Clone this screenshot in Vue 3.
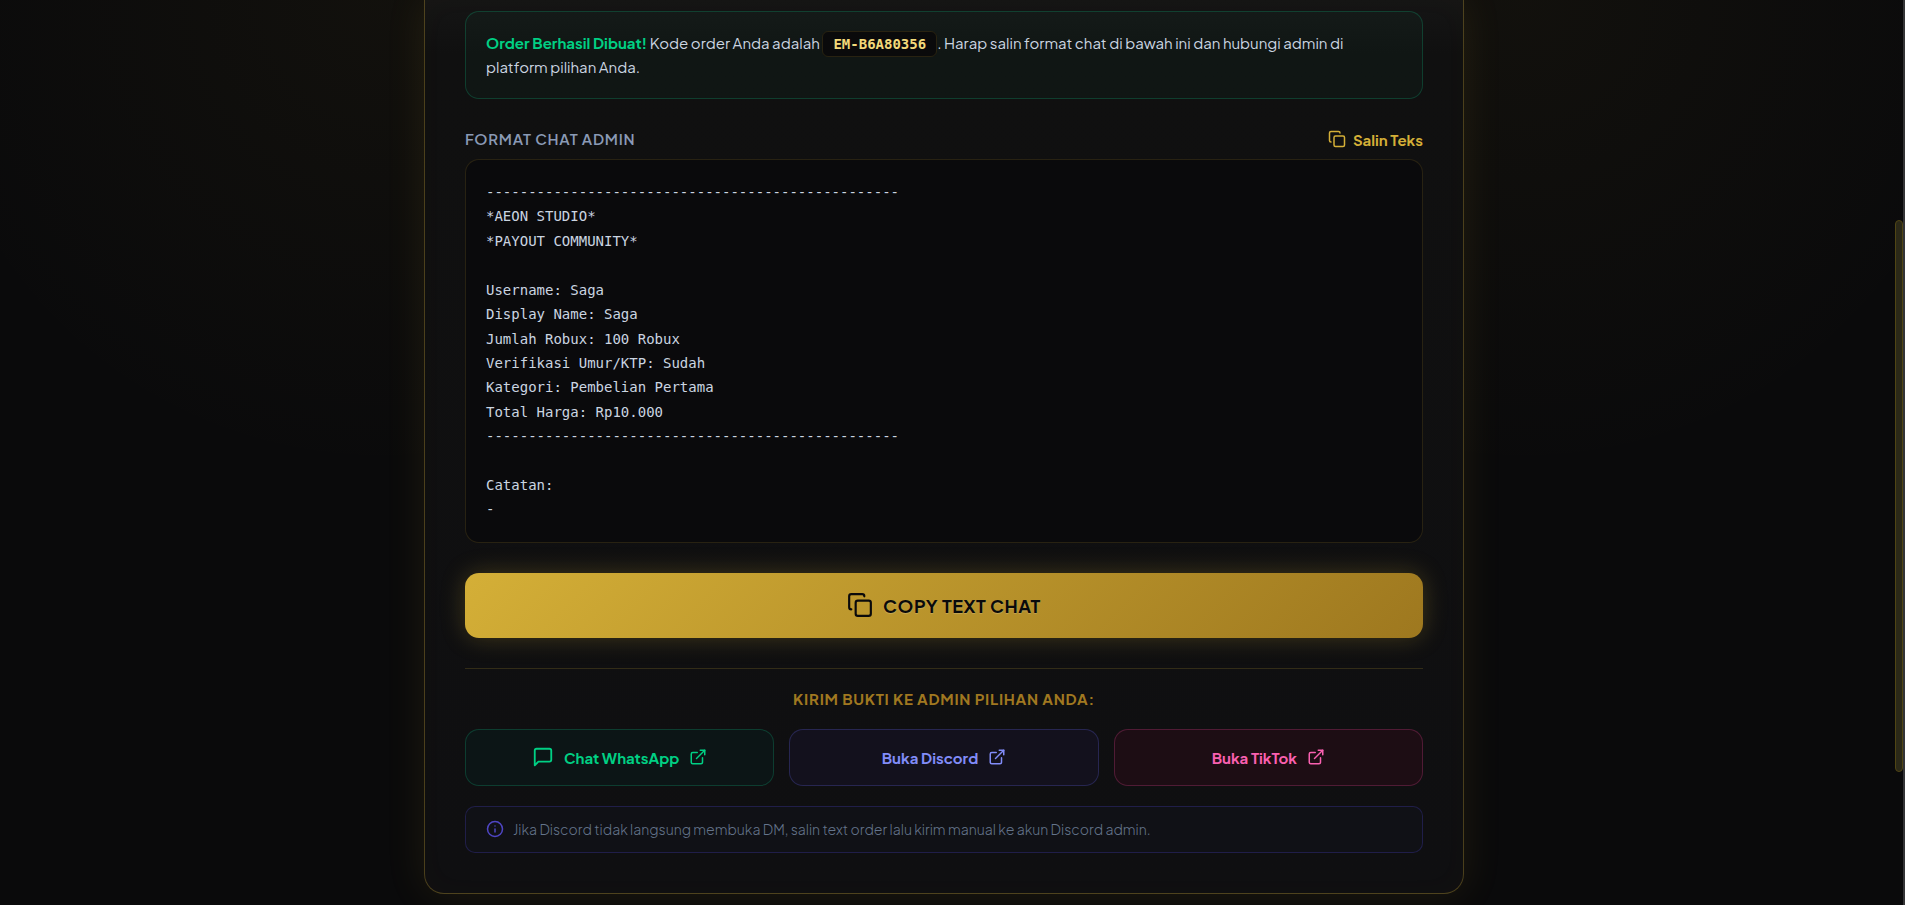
<template>
  <div class="page">
    <main class="card">
      <p class="alert">
        <strong>Order Berhasil Dibuat!</strong> Kode order Anda adalah
        <code class="code">{{ orderCode }}</code>. Harap salin format chat di bawah ini dan hubungi admin di platform pilihan Anda.
      </p>

      <div class="labelRow">
        <h3 class="label">FORMAT CHAT ADMIN</h3>
        <button class="copyLink" type="button" @click="copyText">
          <svg width="18" height="18" viewBox="0 0 24 24" class="ico">
            <rect x="8" y="8" width="14" height="14" rx="2" />
            <path d="M4 16c-1.1 0-2-.9-2-2V4c0-1.1.9-2 2-2h10c1.1 0 2 .9 2 2" />
          </svg>
          Salin Teks
        </button>
      </div>

      <pre class="chat">{{ chatText }}</pre>

      <button class="copyBtn" type="button" @click="copyText">
        <svg width="26" height="26" viewBox="0 0 24 24" class="ico">
          <rect x="8" y="8" width="14" height="14" rx="2" />
          <path d="M4 16c-1.1 0-2-.9-2-2V4c0-1.1.9-2 2-2h10c1.1 0 2 .9 2 2" />
        </svg>
        COPY TEXT CHAT
      </button>

      <section class="contact">
        <h4 class="contactTitle">KIRIM BUKTI KE ADMIN PILIHAN ANDA:</h4>

        <div class="links">
          <a v-for="l in links" :key="l.id" href="#" class="link" :class="l.id">
            <svg v-if="l.bubble" width="22" height="22" viewBox="0 0 24 24" class="ico">
              <path d="M21 15a2 2 0 0 1-2 2H7l-4 4V5a2 2 0 0 1 2-2h14a2 2 0 0 1 2 2z" />
            </svg>
            {{ l.text }}
            <svg width="18" height="18" viewBox="0 0 24 24" class="ico">
              <path d="M15 3h6v6" />
              <path d="M10 14 21 3" />
              <path d="M18 13v6a2 2 0 0 1-2 2H5a2 2 0 0 1-2-2V8a2 2 0 0 1 2-2h6" />
            </svg>
          </a>
        </div>

        <p class="note">
          <svg width="18" height="18" viewBox="0 0 24 24" class="ico">
            <circle cx="12" cy="12" r="10" />
            <path d="M12 16v-4" />
            <path d="M12 8h.01" />
          </svg>
          Jika Discord tidak langsung membuka DM, salin text order lalu kirim manual ke akun Discord admin.
        </p>
      </section>
    </main>

    <div class="track"><div class="thumb"></div></div>
  </div>
</template>

<script setup>
import { computed, ref } from "vue";

const orderCode = ref("EM-B6A80356");

const order = ref({
  username: "Saga",
  displayName: "Saga",
  robux: 100,
  verifikasi: "Sudah",
  kategori: "Pembelian Pertama",
  total: "Rp10.000",
});

const links = [
  { id: "whatsapp", text: "Chat WhatsApp", bubble: true },
  { id: "discord", text: "Buka Discord" },
  { id: "tiktok", text: "Buka TikTok" },
];

const line = "-".repeat(49);

const chatText = computed(() => [
  line,
  "*AEON STUDIO*",
  "*PAYOUT COMMUNITY*",
  "",
  `Username: ${order.value.username}`,
  `Display Name: ${order.value.displayName}`,
  `Jumlah Robux: ${order.value.robux} Robux`,
  `Verifikasi Umur/KTP: ${order.value.verifikasi}`,
  `Kategori: ${order.value.kategori}`,
  `Total Harga: ${order.value.total}`,
  line,
  "",
  "Catatan:",
  "-",
].join("\n"));

async function copyText() {
  await navigator.clipboard.writeText(chatText.value);
}
</script>

<style>
body { margin: 0; background: #0a0a0b; }
</style>

<style scoped>
.page {
  position: relative;
  box-sizing: border-box;
  min-height: 100vh;
  padding: 0 17px 11px 0;
  overflow: hidden;
  font-family: "Plus Jakarta Sans", Inter, sans-serif;
  font-size: 15px;
  color: #cbd5e1;
  background:
    radial-gradient(circle at 20% 0, rgba(212, 175, 55, .04), transparent 480px),
    radial-gradient(circle at 80% 0, rgba(212, 175, 55, .04), transparent 480px),
    #0a0a0b;
}

.card {
  box-sizing: border-box;
  max-width: 1040px;
  margin: 0 auto;
  padding: 11px 40px 40px;
  border: 1px solid rgba(212, 175, 55, .3);
  border-top: 0;
  border-radius: 0 0 20px 20px;
  background: linear-gradient(180deg, #151515, #101010 6%, #0f0f11);
  box-shadow: 0 0 40px rgba(212, 175, 55, .1), inset 0 0 30px rgba(212, 175, 55, .02);
}

.ico {
  flex: none;
  fill: none;
  stroke: currentColor;
  stroke-width: 2;
  stroke-linecap: round;
  stroke-linejoin: round;
}

.alert {
  margin: 0;
  padding: 19px 20px;
  border: 1px solid rgba(16, 185, 129, .25);
  border-radius: 14px;
  background: rgba(16, 185, 129, .04);
  line-height: 24px;
}
.alert strong { color: #00d084; }
.code {
  padding: 4px 10px;
  border: 1px solid rgba(212, 175, 55, .15);
  border-radius: 6px;
  background: #0a0a0b;
  color: #f3d97a;
  font-family: Consolas, "DejaVu Sans Mono", monospace;
  font-size: 14px;
  font-weight: 700;
  line-height: 1;
}

.labelRow {
  display: flex; justify-content: space-between; align-items: center;
  margin: 28px 0 8px;
}
.label { margin: 0; font-size: 15px; line-height: 24px; font-weight: 600; letter-spacing: .05em; color: #8a9ab5; }
.copyLink {
  display: flex; align-items: center; gap: 7px;
  padding: 0; border: 0; background: none;
  font: inherit; font-weight: 700; color: #d4af37; cursor: pointer;
}

.chat {
  margin: 0 0 30px;
  padding: 20px;
  border: 1px solid rgba(212, 175, 55, .15);
  border-radius: 14px;
  background: #0a0a0c;
  font-family: Consolas, "DejaVu Sans Mono", monospace;
  font-size: 14px;
  line-height: 1.745;
}

.copyBtn {
  display: flex; align-items: center; justify-content: center; gap: 10px;
  width: 100%; height: 65px;
  border: 0; border-radius: 14px;
  background: linear-gradient(135deg, #d4af37, #9e781f);
  box-shadow: 0 0 25px rgba(212, 175, 55, .25);
  font: inherit; font-size: 18px; font-weight: 700; letter-spacing: .03em;
  text-shadow: 0 1px 1px rgba(255, 255, 255, .2);
  color: #0a0a0b; cursor: pointer;
}

.contact { margin-top: 30px; padding-top: 19px; border-top: 1px solid rgba(212, 175, 55, .18); }
.contactTitle { margin: 0 0 19px; font-size: 15px; line-height: 22px; font-weight: 700; letter-spacing: .05em; text-align: center; color: #a07820; }

.links { display: grid; grid-template-columns: repeat(3, 1fr); gap: 15px; }
.link {
  display: flex; align-items: center; justify-content: center; gap: 10px;
  height: 55px;
  border: 1px solid; border-radius: 14px;
  font-weight: 700; text-decoration: none;
}
.whatsapp { color: #00d084; border-color: rgba(16, 185, 129, .25); background: #0c1516; }
.discord { color: #818cf8; border-color: rgba(99, 102, 241, .25); background: #13111d; }
.tiktok { color: #f960b0; border-color: rgba(236, 72, 153, .25); background: #1d0d14; }

.note {
  display: flex; align-items: center; gap: 9px;
  margin: 20px 0 0;
  padding: 12px 20px;
  border: 1px solid rgba(79, 70, 229, .25);
  border-radius: 10px;
  background: #101116;
  font-size: 14px; line-height: 21px; font-weight: 300;
  color: #64748b;
}
.note .ico { color: #4f46c5; }

.track { position: absolute; top: 0; right: 0; bottom: 0; width: 10px; box-sizing: border-box; border-right: 2px solid #343436; }
.thumb { height: 61%; margin-top: 220px; box-sizing: border-box; border: 1px solid #504514; border-radius: 4px; background: #2b2918; }
</style>
